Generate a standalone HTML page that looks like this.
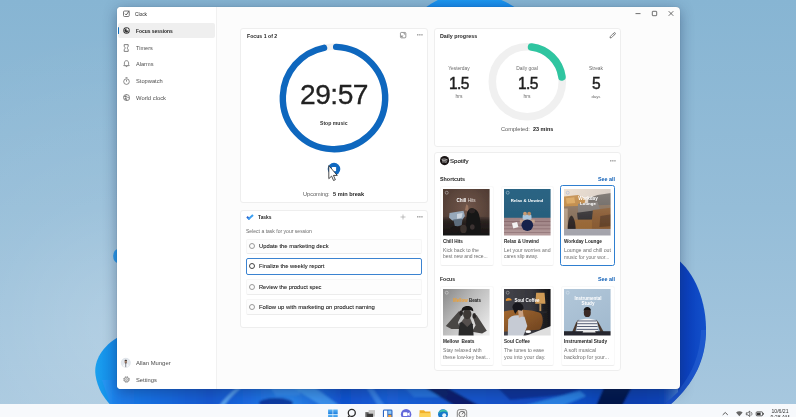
<!DOCTYPE html>
<html lang="en"><head><meta charset="utf-8"><title>Clock - Focus sessions</title>
<style>
html,body{margin:0;padding:0;}
body{width:796px;height:417px;overflow:hidden;position:relative;background:#9cc0db;font-family:"Liberation Sans",sans-serif;}
#app{position:absolute;left:0;top:0;width:796px;height:417px;overflow:hidden;}
.t{position:absolute;white-space:nowrap;line-height:10px;height:10px;will-change:transform;}
.a{position:absolute;}
.card{position:absolute;background:#fff;border:1px solid #eeeeee;border-radius:3px;box-sizing:border-box;}
.row{position:absolute;left:246px;width:175.5px;background:#fdfdfd;border:1px solid #f6f6f6;border-bottom-color:#ececec;border-radius:2px;box-sizing:border-box;}
.radio{position:absolute;width:6.2px;height:6.2px;border-radius:50%;border:0.6px solid #9a9a9a;box-sizing:border-box;}
svg{position:absolute;overflow:visible;}
</style></head><body><div id="app">
<svg width="796" height="417" viewBox="0 0 796 417" style="left:0;top:0">
<defs>
<linearGradient id="g0" x1="0" y1="0" x2="0" y2="1">
<stop offset="0" stop-color="#87b5d3"/><stop offset="0.5" stop-color="#95bdd8"/><stop offset="1" stop-color="#a8c8df"/>
</linearGradient>
<linearGradient id="gs" x1="100" y1="0" x2="680" y2="0" gradientUnits="userSpaceOnUse">
<stop offset="0" stop-color="#2a9df4"/>
<stop offset="0.03" stop-color="#1b7ce8"/>
<stop offset="0.10" stop-color="#186ce0"/>
<stop offset="0.19" stop-color="#1258d0"/>
<stop offset="0.25" stop-color="#1a68e0"/>
<stop offset="0.33" stop-color="#2a84ea"/>
<stop offset="0.42" stop-color="#1052d0"/>
<stop offset="0.50" stop-color="#1a60d8"/>
<stop offset="0.66" stop-color="#1754cc"/>
<stop offset="0.72" stop-color="#1450c8"/>
<stop offset="0.82" stop-color="#1050c8"/>
<stop offset="0.91" stop-color="#0a3fb0"/>
<stop offset="0.97" stop-color="#0c44b8"/>
<stop offset="1" stop-color="#4a80d0"/>
</linearGradient>
<radialGradient id="g1" cx="125" cy="330" r="300" gradientUnits="userSpaceOnUse"><stop offset="0" stop-color="#ffffff" stop-opacity="0.2"/><stop offset="0.45" stop-color="#ffffff" stop-opacity="0.07"/><stop offset="1" stop-color="#ffffff" stop-opacity="0"/></radialGradient>
<linearGradient id="gl" x1="0" y1="0" x2="1" y2="0">
<stop offset="0" stop-color="#1aa0ee"/><stop offset="0.6" stop-color="#1488e8"/><stop offset="1" stop-color="#0c55c8"/>
</linearGradient>
<linearGradient id="gr" x1="0" y1="0" x2="1" y2="0">
<stop offset="0" stop-color="#0a35aa"/><stop offset="0.7" stop-color="#0b40be"/><stop offset="1" stop-color="#1250ca"/>
</linearGradient>
<linearGradient id="gt" x1="0" y1="0" x2="0" y2="1">
<stop offset="0" stop-color="#1f9af0"/><stop offset="1" stop-color="#1585ea"/>
</linearGradient>
<clipPath id="sc"><path d="M 102 380 L 678 380 L 678 392 L 664 405 L 110.500 405 Z"/></clipPath>
<filter id="b1" x="-5%" y="-50%" width="110%" height="200%"><feGaussianBlur stdDeviation="1.2"/></filter>
</defs>
<rect width="796" height="417" fill="url(#g0)"/>
<rect width="796" height="417" fill="url(#g1)"/>
<!-- top bloom -->
<path d="M 423.500 9 Q 431 3 440 -1 L 499 -1 Q 509 3 517.500 9 Z" fill="url(#gt)"/>
<ellipse cx="118" cy="256" rx="4.800" ry="7" fill="#2a98ea"/>
<!-- left petal -->
<path d="M 120 336 C 102 346 93.500 361 95.500 375 C 97.500 389 104 398 110.500 405 L 130 405 L 130 336 Z" fill="url(#gl)"/>
<!-- right petal -->
<path d="M 676 258 C 694 272 707 300 706 334 C 705 358 696 382 670 405 L 640 405 L 640 258 Z" fill="url(#gr)"/>
<path d="M 706 330 C 705 358 696 382 670 405 L 664 405 C 690 382 700 358 701 330 Z" fill="#2a64d4" opacity="0.5"/>
<!-- bottom strip -->
<g clip-path="url(#sc)"><g filter="url(#b1)">
<rect x="100" y="378" width="580" height="30" fill="url(#gs)"/>
<path d="M219 406 Q226 396 238 387 L242 387 Q230 397 224 406 Z" fill="#62adf2" opacity="0.85"/>
<ellipse cx="276" cy="403" rx="17" ry="5" fill="#0a2a90" opacity="0.8"/>
<path d="M270 387 L300 387 L300 395 L276 396 Z" fill="#3a90f0" opacity="0.8"/>
<path d="M292 387 L314 387 L340 406 L322 406 Z" fill="#4aa4f4" opacity="0.7"/>
<path d="M366 387 L372 387 L385 406 L378 406 Z" fill="#3f8ae8" opacity="0.8"/>
<path d="M404 387 L426 387 L442 397 L414 397 Z" fill="#2a7ce4" opacity="0.8"/>
<path d="M424 387 L446 387 L480 406 L455 406 Z" fill="#081a60" opacity="0.9"/>
<path d="M497 387 L588 387 L562 395 L510 400 Z" fill="#0a2a90" opacity="0.85"/>
<path d="M522 406 L580 391 L586 396 L562 406 Z" fill="#2f86e6" opacity="0.9"/>
<path d="M604 387 L632 387 L622 406 L596 406 Z" fill="#050f40" opacity="0.9"/>
</g></g>
</svg>

<div class="a" style="left:116.5px;top:7px;width:563px;height:381.5px;border-radius:4px;background:#fcfcfc;box-shadow:0 3px 14px rgba(20,40,80,0.42),0 0 1px rgba(0,0,0,0.3);"></div>
<div class="a" style="left:116.5px;top:7px;width:100px;height:381.5px;border-radius:4px 0 0 4px;background:#fff;border-right:1px solid #f1f1f1;box-sizing:border-box;"></div>
<svg style="left:122.6px;top:10.4px" width="7" height="7" viewBox="0 0 14 14"><rect x="1" y="2" width="11.5" height="11" rx="2" fill="none" stroke="#555" stroke-width="1.6"/><path d="M4 7.5 L6.5 10 L12.5 1.5" fill="none" stroke="#444" stroke-width="1.7"/></svg>
<div class="t" style="top:9.90px;font-size:4.8px;color:#222;left:134.70px;">Clock</div>
<svg style="left:630px;top:7px" width="50" height="14" viewBox="0 0 50 14"><g stroke="#333" stroke-width="0.7" fill="none"><path d="M5.5 6.6 H10.5"/><rect x="22.3" y="4.3" width="4.4" height="4.4" rx="0.6"/><path d="M38.7 4.2 L43.3 8.8 M43.3 4.2 L38.7 8.8"/></g></svg>
<div class="a" style="left:117.6px;top:23.1px;width:97.2px;height:14.7px;border-radius:2px;background:#efefef;"></div>
<div class="a" style="left:118.3px;top:26.7px;width:1.2px;height:7px;border-radius:1px;background:#0f6cbd;"></div>
<svg style="left:122.6px;top:26.9px" width="7" height="7" viewBox="0 0 14 14"><circle cx="7" cy="7" r="6.4" fill="#2b2b2b"/><path d="M7 2.6 A4.4 4.4 0 0 1 11.4 7 L7 7 Z" fill="#fff"/><circle cx="7" cy="7" r="4.4" fill="none" stroke="#fff" stroke-width="1"/></svg>
<div class="t" style="top:26.60px;font-size:4.93px;color:#1c1c1c;font-weight:700;left:136.40px;">Focus sessions</div>
<svg style="left:122.9px;top:43.6px" width="6.4" height="8" viewBox="0 0 12 16"><path d="M2 1.2 H10 V4.5 C10 6.5 7.5 7 7.5 8 C7.5 9 10 9.5 10 11.5 V14.8 H2 V11.5 C2 9.500 4.500 9 4.500 8 C4.500 7 2 6.500 2 4.500 Z" fill="none" stroke="#5a5a5a" stroke-width="1.5"/></svg>
<div class="t" style="top:42.60px;font-size:5.57px;color:#505050;left:136.30px;">Timers</div>
<svg style="left:122.6px;top:60.4px" width="7" height="7.6" viewBox="0 0 14 15"><path d="M7 1.2 C4 1.2 2.800 3.500 2.800 6 V9 L1.500 11.200 H12.500 L11.200 9 V6 C11.200 3.500 10 1.200 7 1.200 Z M5.300 11.400 C5.300 13.600 8.700 13.600 8.700 11.400" fill="none" stroke="#5a5a5a" stroke-width="1.4"/></svg>
<div class="t" style="top:59.30px;font-size:5.62px;color:#505050;left:136.30px;">Alarms</div>
<svg style="left:122.6px;top:77.0px" width="7" height="8" viewBox="0 0 14 16"><circle cx="7" cy="9.200" r="5.600" fill="none" stroke="#5a5a5a" stroke-width="1.4"/><path d="M5 1.300 H9 M7 9.200 V5.600" fill="none" stroke="#5a5a5a" stroke-width="1.4"/></svg>
<div class="t" style="top:76.10px;font-size:5.72px;color:#505050;left:136.30px;">Stopwatch</div>
<svg style="left:122.6px;top:94.0px" width="7" height="7" viewBox="0 0 14 14"><circle cx="7" cy="7" r="6" fill="none" stroke="#5a5a5a" stroke-width="1.4"/><path d="M1.500 5 H8 M3 9.500 H7 M7 1 C4 4 4 10 7 13" fill="none" stroke="#5a5a5a" stroke-width="1.200"/><circle cx="9.500" cy="9.500" r="3" fill="#fff" stroke="#5a5a5a" stroke-width="1.200"/></svg>
<div class="t" style="top:92.60px;font-size:5.83px;color:#505050;left:136.30px;">World clock</div>
<svg style="left:121.3px;top:357.7px" width="9.6" height="9.6" viewBox="0 0 20 20"><defs><clipPath id="av"><circle cx="10" cy="10" r="10"/></clipPath></defs><circle cx="10" cy="10" r="10" fill="#e3e8ee"/><g clip-path="url(#av)"><ellipse cx="10" cy="19.500" rx="6.800" ry="7.500" fill="#f7f8fa"/><rect x="9.200" y="11.500" width="1.600" height="8" fill="#59606e"/><ellipse cx="10" cy="7.800" rx="2.500" ry="3.300" fill="#a98672"/><path d="M7.400 7 C7.400 2.800 12.600 2.800 12.600 7 C11.500 5.600 8.500 5.600 7.400 7 Z" fill="#2e2622"/><path d="M7.700 8.600 C8.200 12.400 11.800 12.400 12.300 8.600 C11.500 10 8.500 10 7.700 8.600 Z" fill="#3a2e28"/></g><circle cx="10" cy="10" r="9.600" fill="none" stroke="#d5dae0" stroke-width="0.800"/></svg>
<div class="t" style="top:357.90px;font-size:5.89px;color:#4a4a4a;left:136.20px;">Allan Munger</div>
<svg style="left:122.6px;top:375.8px" width="7" height="7" viewBox="0 0 14 14"><circle cx="7" cy="7" r="4.300" fill="none" stroke="#6a6a6a" stroke-width="1.300"/><circle cx="7" cy="7" r="5.700" fill="none" stroke="#6a6a6a" stroke-width="1.700" stroke-dasharray="2.240 2.237"/><circle cx="7" cy="7" r="1.700" fill="none" stroke="#6a6a6a" stroke-width="1.100"/></svg>
<div class="t" style="top:374.50px;font-size:5.78px;color:#4a4a4a;left:136.20px;">Settings</div>
<div class="card" style="left:240px;top:27.5px;width:187.5px;height:175px;"></div>
<div class="t" style="top:31.10px;font-size:5.18px;color:#262626;font-weight:700;left:246.60px;">Focus 1 of 2</div>
<svg style="left:399.9px;top:32.2px" width="6.300" height="6.300" viewBox="0 0 14 14"><rect x="1" y="1" width="12" height="12" rx="2" fill="none" stroke="#666" stroke-width="1.500"/><path d="M3.500 10.500 L6.500 7.500 M3.500 7.800 V10.500 H6.200 M8 3.500 H10.500 V6" fill="none" stroke="#555" stroke-width="1.300"/></svg>
<svg style="left:417.05px;top:34.45px" width="5.800" height="1.700" viewBox="0 0 14 4"><circle cx="2" cy="2" r="1.500" fill="#4a4a4a"/><circle cx="7" cy="2" r="1.500" fill="#4a4a4a"/><circle cx="12" cy="2" r="1.500" fill="#4a4a4a"/></svg>
<svg style="left:274px;top:38px" width="120" height="120" viewBox="274 38 120 120"><circle cx="334" cy="98" r="51.2" fill="none" stroke="#f1f1f1" stroke-width="6.400"/><circle cx="334" cy="98" r="51.2" fill="none" stroke="#0e67be" stroke-width="6.400" stroke-linecap="round" stroke-dasharray="309.01 12.69" transform="rotate(-87.600 334 98)"/></svg>
<div class="t" style="top:88.80px;font-size:28.2px;color:#222;left:234.40px;width:200px;text-align:center;line-height:30px;height:30px;margin-top:-10px;letter-spacing:-0.5px;-webkit-text-stroke:0.3px #222;">29:57</div>
<div class="t" style="top:117.50px;font-size:5.12px;color:#333;font-weight:700;left:319.90px;">Stop music</div>
<svg style="left:324px;top:160px" width="20" height="24" viewBox="324 160 20 24"><circle cx="334" cy="169.100" r="6.300" fill="#0f68c0"/><rect x="331.900" y="167" width="4.200" height="4.200" rx="0.600" fill="#fff"/><path d="M328.80 165.59 L328.80 178.69 L331.62 176.10 L333.55 180.50 L335.35 179.71 L333.43 175.42 L337.28 175.42 Z" fill="#fff" stroke="#222" stroke-width="0.800" stroke-linejoin="round"/></svg>
<div class="t" style="top:188.90px;font-size:5.59px;color:#5a5a5a;left:302.90px;">Upcoming:</div>
<div class="t" style="top:188.90px;font-size:5.6px;color:#222;font-weight:700;left:333.10px;">5 min break</div>
<div class="card" style="left:240px;top:209.5px;width:187.5px;height:118.5px;"></div>
<svg style="left:246.2px;top:213.6px" width="8" height="7" viewBox="0 0 16 14"><path d="M0.600 7 L3.400 4.200 L8.600 9.400 L5.800 12.200 Z" fill="#2b63cf"/><path d="M5.800 12.200 L3 9.400 L12.600 0.600 L15.400 3.400 Z" fill="#3b9ff2"/></svg>
<div class="t" style="top:213.00px;font-size:4.93px;color:#262626;font-weight:700;left:258.10px;">Tasks</div>
<svg style="left:399.5px;top:214px" width="6" height="6" viewBox="0 0 12 12"><path d="M6 1 V11 M1 6 H11" stroke="#999" stroke-width="1.200" fill="none"/></svg>
<svg style="left:417.05px;top:216.45px" width="5.800" height="1.700" viewBox="0 0 14 4"><circle cx="2" cy="2" r="1.500" fill="#4a4a4a"/><circle cx="7" cy="2" r="1.500" fill="#4a4a4a"/><circle cx="12" cy="2" r="1.500" fill="#4a4a4a"/></svg>
<div class="t" style="top:226.10px;font-size:5.05px;color:#6a6a6a;left:246.20px;">Select a task for your session</div>
<div class="row" style="top:238.5px;height:15px;"></div>
<div class="radio" style="left:249.3px;top:242.90px;"></div>
<div class="t" style="top:241.10px;font-size:5.83px;color:#1a1a1a;left:259.40px;-webkit-text-stroke:0.08px #1a1a1a;">Update the marketing deck</div>
<div class="row" style="top:258.0px;height:16.5px;border:1px solid #3b83d1;background:#fff;"></div>
<div class="radio" style="left:249.3px;top:263.15px;border-color:#444;"></div>
<div class="t" style="top:261.35px;font-size:5.78px;color:#1a1a1a;left:259.40px;-webkit-text-stroke:0.08px #1a1a1a;">Finalize the weekly report</div>
<div class="row" style="top:279.0px;height:15.5px;"></div>
<div class="radio" style="left:249.3px;top:283.65px;"></div>
<div class="t" style="top:281.85px;font-size:5.71px;color:#1a1a1a;left:259.40px;-webkit-text-stroke:0.08px #1a1a1a;">Review the product spec</div>
<div class="row" style="top:299.0px;height:15.5px;"></div>
<div class="radio" style="left:249.3px;top:303.65px;"></div>
<div class="t" style="top:301.85px;font-size:5.93px;color:#1a1a1a;left:259.40px;-webkit-text-stroke:0.08px #1a1a1a;">Follow up with marketing on product naming</div>
<div class="card" style="left:433.5px;top:27.5px;width:187.5px;height:119px;"></div>
<div class="t" style="top:31.00px;font-size:5.35px;color:#262626;font-weight:700;left:439.80px;">Daily progress</div>
<svg style="left:609.4px;top:32.1px" width="7" height="7" viewBox="0 0 14 14"><path d="M2 12 L2.800 8.800 L9.800 1.800 C10.600 1 11.600 1 12.300 1.700 C13 2.400 13 3.400 12.200 4.200 L5.200 11.200 Z M8.600 3 L11 5.400" fill="none" stroke="#444" stroke-width="1.300" stroke-linejoin="round"/></svg>
<svg style="left:484px;top:38px" width="88" height="88" viewBox="484 38 88 88"><circle cx="527.300" cy="81.750" r="35" fill="none" stroke="#f0f0f0" stroke-width="7.600"/><path d="M 531.570 47.010 A 35 35 0 0 1 561.960 76.880" fill="none" stroke="#2fc5a0" stroke-width="7.600" stroke-linecap="round"/></svg>
<div class="t" style="top:63.60px;font-size:4.85px;color:#6a6a6a;left:358.80px;width:200px;text-align:center;">Yesterday</div>
<div class="t" style="top:78.90px;font-size:15.6px;color:#1f1f1f;left:359.10px;width:200px;text-align:center;line-height:18px;height:18px;margin-top:-4px;letter-spacing:-0.6px;-webkit-text-stroke:0.45px #1f1f1f;">1.5</div>
<div class="t" style="top:91.60px;font-size:4.97px;color:#6a6a6a;left:358.80px;width:200px;text-align:center;">hrs</div>
<div class="t" style="top:63.60px;font-size:4.9px;color:#6a6a6a;left:427.30px;width:200px;text-align:center;">Daily goal</div>
<div class="t" style="top:78.90px;font-size:15.6px;color:#1f1f1f;left:427.60px;width:200px;text-align:center;line-height:18px;height:18px;margin-top:-4px;letter-spacing:-0.6px;-webkit-text-stroke:0.45px #1f1f1f;">1.5</div>
<div class="t" style="top:91.60px;font-size:4.97px;color:#6a6a6a;left:427.30px;width:200px;text-align:center;">hrs</div>
<div class="t" style="top:63.60px;font-size:4.84px;color:#6a6a6a;left:495.90px;width:200px;text-align:center;">Streak</div>
<div class="t" style="top:78.90px;font-size:15.6px;color:#1f1f1f;left:496.20px;width:200px;text-align:center;line-height:18px;height:18px;margin-top:-4px;letter-spacing:-0.6px;-webkit-text-stroke:0.45px #1f1f1f;">5</div>
<div class="t" style="top:91.60px;font-size:4.26px;color:#6a6a6a;left:495.90px;width:200px;text-align:center;">days</div>
<div class="t" style="top:123.60px;font-size:5.67px;color:#5a5a5a;left:500.80px;">Completed:</div>
<div class="t" style="top:123.60px;font-size:5.48px;color:#222;font-weight:700;left:532.50px;">23 mins</div>
<div class="card" style="left:433.5px;top:152.3px;width:187.5px;height:218.7px;"></div>
<svg style="left:439.5px;top:155.9px" width="9.200" height="9.200" viewBox="0 0 20 20"><circle cx="10" cy="10" r="10" fill="#191414"/><path d="M4.500 7.200 C8.500 6 12.500 6.400 15.800 8.200 M5.200 10.200 C8.500 9.300 11.800 9.600 14.600 11.200 M5.900 13 C8.500 12.400 11 12.600 13.300 13.900" fill="none" stroke="#fff" stroke-width="1.500" stroke-linecap="round"/></svg>
<div class="t" style="top:155.60px;font-size:6.05px;color:#1f1f1f;left:450.20px;-webkit-text-stroke:0.15px #1f1f1f;">Spotify</div>
<svg style="left:610.05px;top:159.65px" width="5.800" height="1.700" viewBox="0 0 14 4"><circle cx="2" cy="2" r="1.500" fill="#4a4a4a"/><circle cx="7" cy="2" r="1.500" fill="#4a4a4a"/><circle cx="12" cy="2" r="1.500" fill="#4a4a4a"/></svg>
<div class="t" style="top:173.60px;font-size:5.38px;color:#222;font-weight:700;left:439.80px;">Shortcuts</div>
<div class="t" style="top:173.60px;font-size:5.36px;color:#0f5fb6;font-weight:700;left:414.70px;width:200px;text-align:right;">See all</div>
<div class="t" style="top:273.50px;font-size:5.09px;color:#222;font-weight:700;left:439.60px;">Focus</div>
<div class="t" style="top:273.50px;font-size:5.36px;color:#0f5fb6;font-weight:700;left:414.90px;width:200px;text-align:right;">See all</div>
<div class="a" style="left:560.3px;top:185.2px;width:54.5px;height:80.5px;border:1px solid #2f7fd0;border-radius:2.5px;box-sizing:border-box;background:#fff;"></div>
<div class="a" style="left:440px;top:185.5px;width:53.5px;height:80.5px;border:1px solid #f9f9f9;border-bottom-color:#eeeeee;border-radius:2.5px;box-sizing:border-box;"></div>
<div class="a" style="left:500.5px;top:185.5px;width:53.5px;height:80.5px;border:1px solid #f9f9f9;border-bottom-color:#eeeeee;border-radius:2.5px;box-sizing:border-box;"></div>
<div class="a" style="left:440px;top:285.5px;width:53.5px;height:80.5px;border:1px solid #f9f9f9;border-bottom-color:#eeeeee;border-radius:2.5px;box-sizing:border-box;"></div>
<div class="a" style="left:500.5px;top:285.5px;width:53.5px;height:80.5px;border:1px solid #f9f9f9;border-bottom-color:#eeeeee;border-radius:2.5px;box-sizing:border-box;"></div>
<div class="a" style="left:561px;top:285.5px;width:53.5px;height:80.5px;border:1px solid #f9f9f9;border-bottom-color:#eeeeee;border-radius:2.5px;box-sizing:border-box;"></div>
<svg style="left:443.1px;top:189.1px" width="46.6" height="46.4" viewBox="0 0 100 100" preserveAspectRatio="none"><defs><clipPath id="cc1"><rect width="100" height="100"/></clipPath><filter id="cf1" x="-10%" y="-10%" width="120%" height="120%"><feGaussianBlur stdDeviation="1.1"/></filter></defs><g clip-path="url(#cc1)"><g filter="url(#cf1)">
<defs><radialGradient id="c1g" cx="0.5" cy="0.42" r="0.75"><stop offset="0" stop-color="#72574b"/><stop offset="1" stop-color="#43322b"/></radialGradient>
<linearGradient id="c1s" x1="0" y1="0" x2="0" y2="1"><stop offset="0" stop-color="#4d3d36"/><stop offset="0.2" stop-color="#2a2220"/><stop offset="1" stop-color="#131010"/></linearGradient></defs>
<rect x="-5" y="-5" width="110" height="110" fill="url(#c1g)"/>
<rect x="-5" y="60" width="110" height="45" fill="url(#c1s)"/>
<path d="M47 46 L50 33 L54 36 L55 48 Z" fill="#9a7560"/>
<path d="M52 50 C55 40 72 40 76 52 C80 62 82 80 80 105 L50 105 C52 85 48 65 52 50 Z" fill="#131313"/>
<ellipse cx="62" cy="47" rx="7" ry="6" fill="#2a2422"/>
<path d="M14 52 L44 47 L47 58 L42 66 L20 68 L13 62 Z" fill="#97a8ba"/>
<path d="M22 66 L42 64 L40 78 L26 82 Z" fill="#5d6c7c"/>
<path d="M30 54 L42 52 L40 62 L30 64 Z" fill="#cdd5de"/>
<ellipse cx="26" cy="88" rx="10" ry="8" fill="#1a1716"/>
<ellipse cx="44" cy="86" rx="7" ry="9" fill="#3a322e"/>
<ellipse cx="63" cy="82" rx="5" ry="6" fill="#3a3230"/>
<circle cx="8" cy="8" r="3.2" fill="none" stroke="#ddd" stroke-width="1.2" opacity="0.8"/></g></g></svg>
<svg style="left:503.7px;top:189.1px" width="46.6" height="46.4" viewBox="0 0 100 100" preserveAspectRatio="none"><defs><clipPath id="cc2"><rect width="100" height="100"/></clipPath><filter id="cf2" x="-10%" y="-10%" width="120%" height="120%"><feGaussianBlur stdDeviation="1.1"/></filter></defs><g clip-path="url(#cc2)"><g filter="url(#cf2)">
<defs><linearGradient id="c2g" x1="0" y1="0" x2="0" y2="1"><stop offset="0" stop-color="#2c6584"/><stop offset="1" stop-color="#245a78"/></linearGradient>
<linearGradient id="c2d" x1="0" y1="0" x2="0" y2="1"><stop offset="0" stop-color="#9c8082"/><stop offset="1" stop-color="#b9a0a0"/></linearGradient></defs>
<rect x="-5" y="-5" width="110" height="110" fill="url(#c2g)"/>
<rect x="-5" y="62" width="110" height="43" fill="url(#c2d)"/>
<rect x="-5" y="69" width="110" height="1.800" fill="#86696b"/><rect x="-5" y="77" width="110" height="1.800" fill="#86696b"/><rect x="-5" y="85" width="110" height="1.800" fill="#8e7072"/><rect x="-5" y="93" width="110" height="1.800" fill="#94787a"/>
<rect x="40" y="55" width="19" height="12" rx="3" fill="#a9c6de"/>
<circle cx="45" cy="53" r="4" fill="#c99b72"/><circle cx="54" cy="53" r="4" fill="#b98a62"/>
<rect x="34" y="66" width="32" height="7" fill="#c4a48e"/>
<circle cx="50" cy="78" r="12.500" fill="#17214c"/>
<path d="M17 74 L28 71 L31 82 L20 85 Z" fill="#f2f2f2"/>
<circle cx="8" cy="8" r="3.2" fill="none" stroke="#cfe0ea" stroke-width="1.2" opacity="0.8"/></g></g></svg>
<svg style="left:564.1px;top:189.1px" width="46.6" height="46.4" viewBox="0 0 100 100" preserveAspectRatio="none"><defs><clipPath id="cc3"><rect width="100" height="100"/></clipPath><filter id="cf3" x="-10%" y="-10%" width="120%" height="120%"><feGaussianBlur stdDeviation="1.1"/></filter></defs><g clip-path="url(#cc3)"><g filter="url(#cf3)">
<defs><linearGradient id="c3g" x1="0" y1="0" x2="1" y2="0.3"><stop offset="0" stop-color="#efe2d3"/><stop offset="1" stop-color="#cfc6c0"/></linearGradient>
<linearGradient id="c3h" x1="0" y1="0" x2="0" y2="1"><stop offset="0" stop-color="#f0e4d8" stop-opacity="0.3"/><stop offset="0.6" stop-color="#f0e4d8" stop-opacity="0.08"/><stop offset="1" stop-color="#f0e4d8" stop-opacity="0"/></linearGradient></defs>
<rect x="-5" y="-5" width="110" height="110" fill="url(#c3g)"/>
<path d="M52 20 L72 13 L105 8 L105 50 L52 50 Z" fill="#5f5b59"/>
<path d="M-5 17 L30 13 L46 22 L42 40 L-5 42 Z" fill="#bb7f35"/>
<path d="M4 20 L22 18 L24 30 L6 32 Z" fill="#d9a050"/>
<path d="M-5 38 L105 34 L105 90 L-5 90 Z" fill="#806854"/>
<path d="M-5 42 L8 42 L8 88 L-5 88 Z" fill="#b09880"/>
<path d="M30 32 L72 28 L80 52 L30 56 Z" fill="#777270"/>
<path d="M28 51 L68 46 L72 65 L30 69 Z" fill="#2a282c"/>
<path d="M62 45 L105 40 L105 86 L58 87 Z" fill="#84552c"/>
<path d="M78 58 L105 54 L105 80 L76 82 Z" fill="#5e3c22"/>
<path d="M22 66 L60 66 L60 88 L22 88 Z" fill="#94622f"/>
<path d="M8 88 C8 72 10 60 16 57 C22 60 25 74 25 88 Z" fill="#261e1d"/>
<rect x="-5" y="86" width="110" height="19" fill="#a3a3ab"/>
<rect x="-5" y="-5" width="110" height="110" fill="url(#c3h)"/>
<circle cx="8" cy="8" r="3.2" fill="none" stroke="#8fa6d8" stroke-width="1.2" opacity="0.8"/></g></g></svg>
<svg style="left:443.1px;top:289.1px" width="46.6" height="46.4" viewBox="0 0 100 100" preserveAspectRatio="none"><defs><clipPath id="cc4"><rect width="100" height="100"/></clipPath><filter id="cf4" x="-10%" y="-10%" width="120%" height="120%"><feGaussianBlur stdDeviation="1.1"/></filter></defs><g clip-path="url(#cc4)"><g filter="url(#cf4)">
<defs><linearGradient id="c4g" x1="0" y1="0" x2="1" y2="0.8"><stop offset="0" stop-color="#808080"/><stop offset="0.45" stop-color="#b9b9b9"/><stop offset="1" stop-color="#ececec"/></linearGradient></defs>
<rect x="-5" y="-5" width="110" height="110" fill="url(#c4g)"/>
<path d="M6 80 L34 48 L42 52 L32 72 L38 86 L18 86 Z" fill="#4a4644"/>
<path d="M94 90 L72 56 L64 60 L70 78 L62 92 L84 96 Z" fill="#4a4644"/>
<path d="M33 105 L35 74 L44 68 L58 68 L64 76 L66 105 Z" fill="#2b2b2c"/>
<path d="M40 70 L46 62 L58 62 L62 72 L52 82 Z" fill="#55504d"/>
<ellipse cx="52" cy="54" rx="9" ry="11" fill="#3c3836"/>
<path d="M40 48 C38 34 66 32 65 48 C58 44 48 44 40 48 Z" fill="#171515"/>
<ellipse cx="39" cy="52" rx="4" ry="6" fill="#2a2827"/><ellipse cx="67" cy="58" rx="4" ry="6" fill="#2a2827"/>
<circle cx="8" cy="8" r="3.2" fill="none" stroke="#e8e8e8" stroke-width="1.2" opacity="0.8"/></g></g></svg>
<svg style="left:503.7px;top:289.1px" width="46.6" height="46.4" viewBox="0 0 100 100" preserveAspectRatio="none"><defs><clipPath id="cc5"><rect width="100" height="100"/></clipPath><filter id="cf5" x="-10%" y="-10%" width="120%" height="120%"><feGaussianBlur stdDeviation="1.1"/></filter></defs><g clip-path="url(#cc5)"><g filter="url(#cf5)">
<defs><linearGradient id="c5g" x1="0" y1="0" x2="1" y2="0"><stop offset="0" stop-color="#44444b"/><stop offset="0.6" stop-color="#36363c"/><stop offset="0.85" stop-color="#1c1c1f"/><stop offset="1" stop-color="#141416"/></linearGradient>
<linearGradient id="c5c" x1="0" y1="0" x2="1" y2="1"><stop offset="0" stop-color="#a56a30"/><stop offset="1" stop-color="#6e4320"/></linearGradient></defs>
<rect x="-5" y="-5" width="110" height="110" fill="url(#c5g)"/>
<path d="M69 8 L87 8 L89 32 L67 32 Z" fill="#cf9a55"/>
<rect x="76" y="32" width="4" height="16" fill="#b89058"/>
<rect x="60" y="48" width="32" height="4" fill="#26262a"/>
<path d="M-5 50 C20 42 60 44 78 52 C86 60 84 80 76 88 L-5 92 Z" fill="url(#c5c)"/>
<path d="M4 22 C8 18 14 18 17 24 L4 26 Z" fill="#e09030"/>
<path d="M8 105 L9 66 C14 56 30 54 44 60 L50 80 L40 105 Z" fill="#c6cbd4"/>
<path d="M30 44 L40 44 L42 58 L32 62 Z" fill="#c9a182"/>
<path d="M18 40 C18 25 42 25 42 42 L38 47 L30 45 L24 54 Z" fill="#19191a"/>
<path d="M36 105 L105 78 L105 105 Z" fill="#dedede"/>
<ellipse cx="52" cy="92" rx="6" ry="3" fill="#fff"/>
<circle cx="8" cy="8" r="3.2" fill="none" stroke="#ccc" stroke-width="1.2" opacity="0.8"/></g></g></svg>
<svg style="left:564.1px;top:289.1px" width="46.6" height="46.4" viewBox="0 0 100 100" preserveAspectRatio="none"><defs><clipPath id="cc6"><rect width="100" height="100"/></clipPath><filter id="cf6" x="-10%" y="-10%" width="120%" height="120%"><feGaussianBlur stdDeviation="1.1"/></filter></defs><g clip-path="url(#cc6)"><g filter="url(#cf6)">
<defs><linearGradient id="c6g" x1="0" y1="0" x2="0.6" y2="1"><stop offset="0" stop-color="#b3c8da"/><stop offset="1" stop-color="#a2bacf"/></linearGradient></defs>
<rect x="-5" y="-5" width="110" height="110" fill="url(#c6g)"/>
<path d="M26 72 L31 66 L24 94 L17 94 Z" fill="#4a382f"/><path d="M74 72 L69 66 L78 94 L85 92 Z" fill="#4a382f"/>
<path d="M27 92 L29 70 C35 62 65 62 71 70 L73 92 Z" fill="#f3f3f5"/>
<g fill="#3a435e"><rect x="30" y="68" width="40" height="1.800"/><rect x="28" y="74" width="44" height="1.800"/><rect x="28" y="80" width="44" height="1.800"/><rect x="27" y="86" width="46" height="1.800"/></g>
<ellipse cx="50" cy="51" rx="7.500" ry="9.500" fill="#3a2b26"/>
<path d="M42 47 C42 36 58 36 58 47 C54 44 46 44 42 47 Z" fill="#151212"/>
<rect x="-5" y="91" width="110" height="14" fill="#26272d"/>
<path d="M42 89 L66 89 L68 94 L40 94 Z" fill="#e9e9e9"/>
<circle cx="8" cy="8" r="3.2" fill="none" stroke="#dde8f2" stroke-width="1.2" opacity="0.8"/></g></g></svg>
<div class="t" style="top:195.60px;font-size:4.62px;color:#fff;font-weight:700;left:366.40px;width:200px;text-align:center;">Chill <span style="font-weight:400;color:#e0d8d4">Hits</span></div>
<div class="t" style="top:195.60px;font-size:4.31px;color:#fff;font-weight:700;left:427.00px;width:200px;text-align:center;">Relax &amp; Unwind</div>
<div class="t" style="top:193.90px;font-size:4.64px;color:#fff;font-weight:700;left:488.00px;width:200px;text-align:center;">Workday</div>
<div class="t" style="top:198.90px;font-size:4.38px;color:#fff;font-weight:700;left:488.00px;width:200px;text-align:center;">Lounge</div>
<div class="t" style="top:295.60px;font-size:4.42px;color:#fff;font-weight:700;left:366.60px;width:200px;text-align:center;"><span style="color:#f0a030">Mellow</span> <span style="color:#1a1a1a">Beats</span></div>
<div class="t" style="top:295.60px;font-size:4.5px;color:#fff;font-weight:700;left:427.40px;width:200px;text-align:center;">Soul Coffee</div>
<div class="t" style="top:293.90px;font-size:4.5px;color:#fff;font-weight:700;left:488.00px;width:200px;text-align:center;">Instrumental</div>
<div class="t" style="top:299.10px;font-size:4.68px;color:#fff;font-weight:700;left:488.00px;width:200px;text-align:center;">Study</div>
<div class="t" style="top:237.00px;font-size:4.59px;color:#1f1f1f;font-weight:700;left:443.00px;">Chill Hits</div>
<div class="t" style="top:245.00px;font-size:5.1px;color:#707070;left:443.00px;">Kick back to the</div>
<div class="t" style="top:251.70px;font-size:4.97px;color:#707070;left:443.00px;">best new and rece...</div>
<div class="t" style="top:237.00px;font-size:4.64px;color:#1f1f1f;font-weight:700;left:503.60px;">Relax &amp; Unwind</div>
<div class="t" style="top:245.00px;font-size:5.15px;color:#707070;left:503.60px;">Let your worries and</div>
<div class="t" style="top:251.70px;font-size:4.86px;color:#707070;left:503.60px;">cares slip away.</div>
<div class="t" style="top:237.00px;font-size:4.7px;color:#1f1f1f;font-weight:700;left:564.00px;">Workday Lounge</div>
<div class="t" style="top:245.00px;font-size:5.25px;color:#707070;left:564.00px;">Lounge and chill out</div>
<div class="t" style="top:251.70px;font-size:5.09px;color:#707070;left:564.00px;">music for your wor...</div>
<div class="t" style="top:337.20px;font-size:4.76px;color:#1f1f1f;font-weight:700;left:443.00px;">Mellow&nbsp; Beats</div>
<div class="t" style="top:345.10px;font-size:5.09px;color:#707070;left:443.00px;">Stay relaxed with</div>
<div class="t" style="top:351.80px;font-size:5.12px;color:#707070;left:443.00px;">these low-key beat...</div>
<div class="t" style="top:337.20px;font-size:4.68px;color:#1f1f1f;font-weight:700;left:503.60px;">Soul Coffee</div>
<div class="t" style="top:345.10px;font-size:5.03px;color:#707070;left:503.60px;">The tunes to ease</div>
<div class="t" style="top:351.80px;font-size:5.31px;color:#707070;left:503.60px;">you into your day.</div>
<div class="t" style="top:337.20px;font-size:4.75px;color:#1f1f1f;font-weight:700;left:564.00px;">Instrumental Study</div>
<div class="t" style="top:345.10px;font-size:5.19px;color:#707070;left:564.00px;">A soft musical</div>
<div class="t" style="top:351.80px;font-size:5.26px;color:#707070;left:564.00px;">backdrop for your...</div>
<div class="a" style="left:0;top:404px;width:796px;height:13px;background:#f7f9fc;"></div>
<svg style="left:320px;top:404px" width="160" height="13" viewBox="320 404 160 13"><defs><linearGradient id="wl" x1="0" y1="0" x2="0" y2="1"><stop offset="0" stop-color="#5cb6f4"/><stop offset="1" stop-color="#1f7fe0"/></linearGradient></defs><g transform="translate(332.9 414.3)"><g fill="url(#wl)"><rect x="-4.800" y="-4.800" width="4.500" height="4.500"/><rect x="0.300" y="-4.800" width="4.500" height="4.500"/><rect x="-4.800" y="0.300" width="4.500" height="4.500"/><rect x="0.300" y="0.300" width="4.500" height="4.500"/></g></g><g transform="translate(351.5 414.3)"><circle cx="0.300" cy="-1.400" r="3.500" fill="none" stroke="#2a2a2a" stroke-width="1.300"/><path d="M-2.100 1.300 L-4.300 4.200" stroke="#2a2a2a" stroke-width="1.400"/></g><g transform="translate(370.1 414.3)"><rect x="-4.800" y="-2.200" width="6" height="6" fill="#666"/><rect x="-1.500" y="-4.200" width="6.400" height="6.400" fill="#c9c9c9"/><rect x="-3" y="-0.600" width="6" height="6" fill="#3a3a3a"/></g><g transform="translate(387.7 414.3)"><rect x="-4.800" y="-4.800" width="9.600" height="9.600" rx="1.400" fill="#2a66c4"/><rect x="-3.700" y="-3.700" width="3.300" height="7.400" fill="#fff"/><rect x="0.500" y="-3.700" width="3.200" height="3.300" fill="#8cc8f7"/><rect x="0.500" y="0.500" width="3.200" height="3.200" fill="#f2a33a"/></g><g transform="translate(406.1 414.3)"><circle cx="0" cy="0" r="5.200" fill="#6468da"/><rect x="-3" y="-2.100" width="4.400" height="3.900" rx="0.900" fill="#fff"/><path d="M1.500 -0.800 L3.500 -2 V1.800 L1.500 0.600 Z" fill="#fff"/></g><g transform="translate(425.0 414.3)"><path d="M-5.400 -4 H-1 L0.200 -2.700 H5.400 V4.400 H-5.400 Z" fill="#f0b02a"/><rect x="-5.400" y="-1.200" width="10.800" height="5.800" fill="#fcd257"/></g><g transform="translate(443.0 414.3)"><circle cx="0" cy="0" r="5" fill="#1878ca"/><path d="M-4.800 -1 C-3 -5.600 3.800 -5.600 5 -1.600 C2.500 -3.300 -1.500 -3 -4.800 -1 Z" fill="#3cc4a4"/><circle cx="1.200" cy="1" r="2" fill="#eaf4fb"/></g><g transform="translate(462.0 414.3)"><rect x="-4.700" y="-4.700" width="9.400" height="9.400" rx="2.200" fill="#f4f4f4" stroke="#777" stroke-width="0.900"/><circle cx="0" cy="0" r="3" fill="none" stroke="#555" stroke-width="0.800"/><path d="M0 0 L2.200 -3" stroke="#555" stroke-width="0.800"/></g></svg>
<svg style="left:716px;top:404px" width="56" height="13" viewBox="716 404 56 13"><path d="M722.700 414.900 L725.250 412.500 L727.800 414.900" fill="none" stroke="#444" stroke-width="0.900"/><path d="M736.100 412.600 C738 410.800 740.700 410.800 742.600 412.600 L739.350 416.300 Z" fill="#666"/><path d="M746.300 412.800 H747.800 L749.800 411.100 V416.500 L747.800 414.800 H746.300 Z" fill="none" stroke="#444" stroke-width="0.800"/><path d="M751.200 412.100 C752.200 413.100 752.200 414.500 751.200 415.500" fill="none" stroke="#444" stroke-width="0.700"/><rect x="756.200" y="411.900" width="6.400" height="3.900" rx="0.800" fill="none" stroke="#333" stroke-width="0.800"/><rect x="757" y="412.700" width="3.600" height="2.300" fill="#333"/><rect x="763" y="413.100" width="0.800" height="1.500" fill="#333"/></svg>
<div class="t" style="top:406.10px;font-size:5.13px;color:#333;left:679.85px;width:200px;text-align:center;">10/6/21</div>
<div class="t" style="top:412.30px;font-size:5.18px;color:#333;left:679.85px;width:200px;text-align:center;">9:28 AM</div>
</div></body></html>
